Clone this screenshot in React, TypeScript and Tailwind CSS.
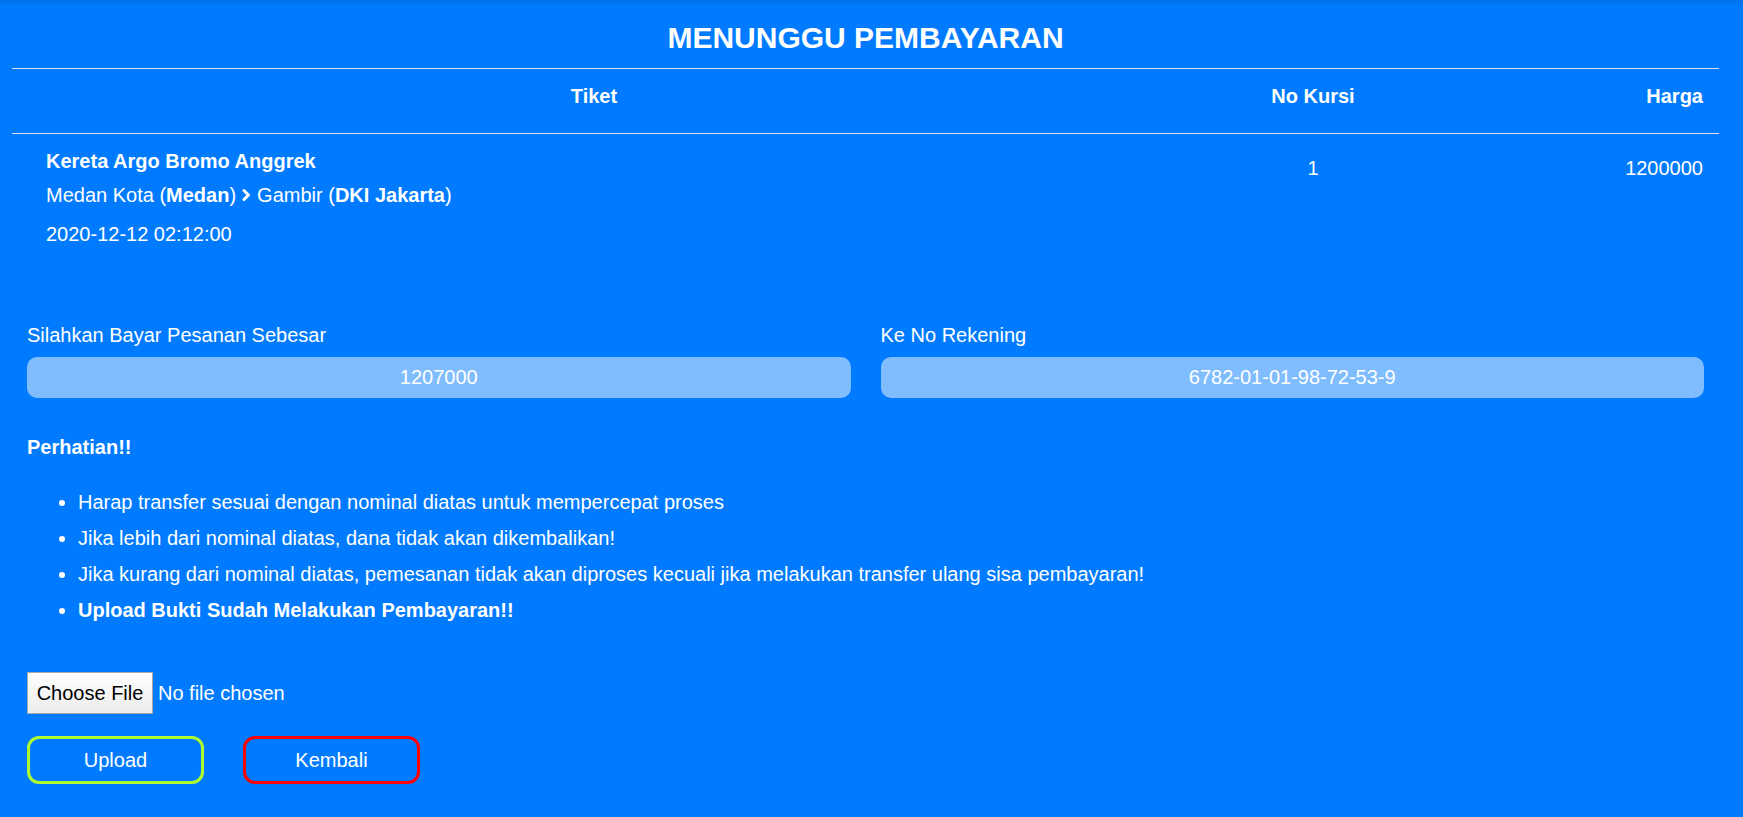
import React from "react";

function Chevron() {
  return (
    <svg width="9" height="14" viewBox="0 0 9 14" className="inline-block mx-[6px] -mt-[3px] align-middle" aria-hidden>
      <path d="M2 2.5 L6.5 7 L2 11.5" fill="none" stroke="white" strokeWidth="3" strokeLinecap="round" strokeLinejoin="round" />
    </svg>
  );
}

export default function App() {
  return (
    <div
      className="relative min-h-screen bg-[#007bff] text-white text-[20px]"
      style={{ fontFamily: '"Liberation Sans", Arial, sans-serif' }}
    >
      <div className="pointer-events-none absolute left-0 right-0 top-0 h-[8px] bg-gradient-to-b from-[rgba(0,40,90,0.12)] to-transparent" />
      <div className="pl-[12px] pr-[24px]">
        <h4 className="pt-[20px] h-[56px] leading-[36px] text-center text-[30px] font-bold mb-[12px]">
          MENUNGGU PEMBAYARAN
        </h4>

        <div className="border-t border-[#dee2e6]">
          <div className="grid grid-cols-[1164px_274px_1fr] h-[65px] pt-[12px] border-b border-[#dee2e6] font-bold leading-[30px]">
            <div className="text-center">Tiket</div>
            <div className="text-center">No Kursi</div>
            <div className="text-right pr-[16px]">Harga</div>
          </div>
          <div className="grid grid-cols-[1164px_274px_1fr] pb-[15px] leading-[30px]">
            <div className="pl-[34px] pt-[12px]">
              <div className="font-bold">Kereta Argo Bromo Anggrek</div>
              <div className="mt-[4px]">
                Medan Kota (<b>Medan</b>)
                <Chevron />
                Gambir (<b>DKI Jakarta</b>)
              </div>
              <div className="mt-[9px]">2020-12-12 02:12:00</div>
            </div>
            <div className="text-center pt-[19px]">1</div>
            <div className="text-right pr-[16px] pt-[19px]">1200000</div>
          </div>
        </div>

        <div className="px-[15px] mt-[56px]">
          <div className="grid grid-cols-2 gap-[30px]">
            <div>
              <div className="leading-[30px] mb-[7px]">Silahkan Bayar Pesanan Sebesar</div>
              <div className="h-[41px] rounded-[10px] bg-[#80bdff] flex items-center justify-center pb-[2px]">1207000</div>
            </div>
            <div>
              <div className="leading-[30px] mb-[7px]">Ke No Rekening</div>
              <div className="h-[41px] rounded-[10px] bg-[#80bdff] flex items-center justify-center pb-[2px]">6782-01-01-98-72-53-9</div>
            </div>
          </div>

          <div className="mt-[34px] leading-[30px] font-bold">Perhatian!!</div>
          <ul className="mt-[25px] list-disc pl-[51px]">
            <li className="h-[36px] leading-[30px]">Harap transfer sesuai dengan nominal diatas untuk mempercepat proses</li>
            <li className="h-[36px] leading-[30px]">Jika lebih dari nominal diatas, dana tidak akan dikembalikan!</li>
            <li className="h-[36px] leading-[30px]">Jika kurang dari nominal diatas, pemesanan tidak akan diproses kecuali jika melakukan transfer ulang sisa pembayaran!</li>
            <li className="h-[36px] leading-[30px] font-bold">Upload Bukti Sudah Melakukan Pembayaran!!</li>
          </ul>

          <label className="mt-[41px] flex items-center h-[42px] cursor-pointer">
            <span className="h-[42px] w-[126px] flex items-center justify-center border border-[#a7a7a7] bg-gradient-to-b from-white to-[#ececec] text-black">
              Choose File
            </span>
            <span className="ml-[5px]">No file chosen</span>
            <input type="file" className="hidden" />
          </label>

          <div className="mt-[22px] flex gap-[39px]">
            <button className="w-[177px] h-[48px] rounded-[12px] border-[3px] border-[#adff2f] text-white text-[20px]">
              Upload
            </button>
            <button className="w-[177px] h-[48px] rounded-[12px] border-[3px] border-[#ff0000] text-white text-[20px]">
              Kembali
            </button>
          </div>
        </div>
      </div>
    </div>
  );
}
